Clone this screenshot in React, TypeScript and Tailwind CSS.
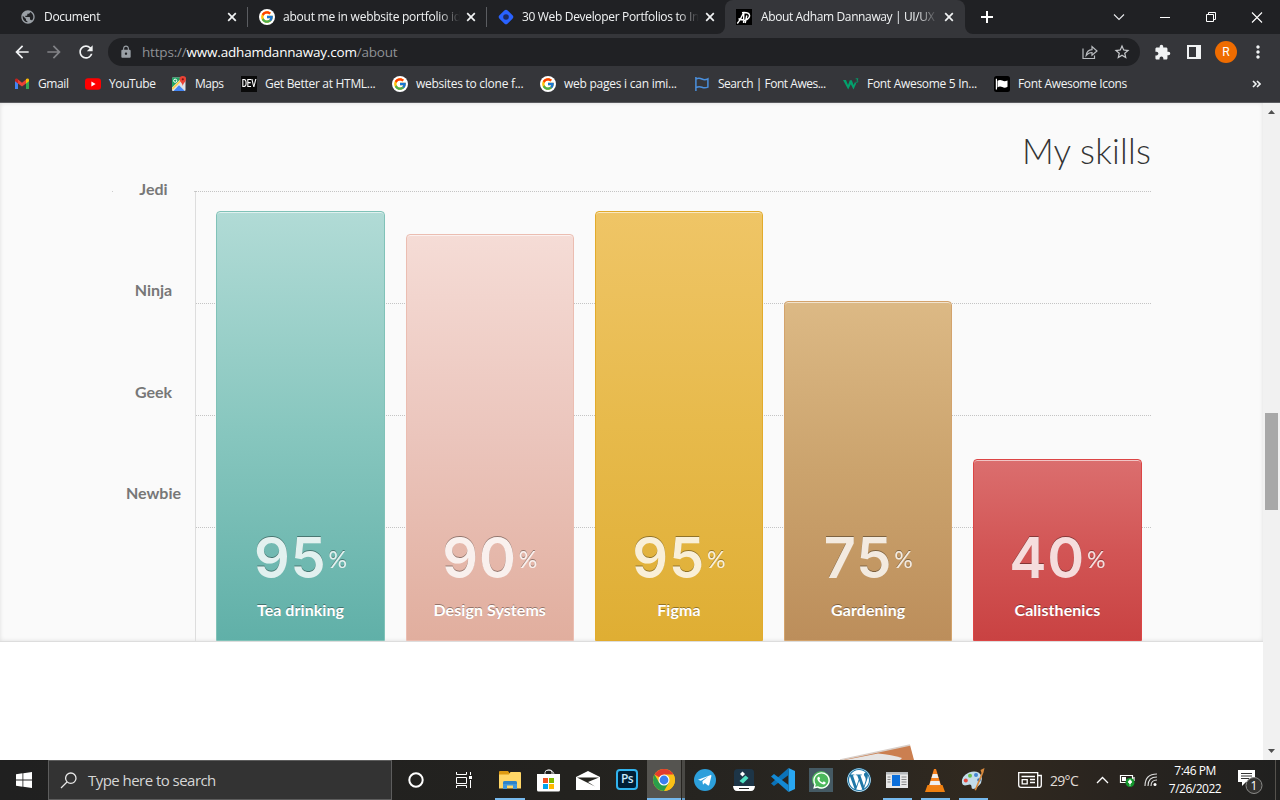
import React from "react";
import type { ReactNode } from "react";
import { FcGoogle } from "react-icons/fc";
import {
  MdArrowBack,
  MdArrowForward,
  MdExtension,
  MdLock,
  MdMoreVert,
  MdPublic,
  MdRefresh,
  MdStarBorder,
} from "react-icons/md";
import { FaWhatsapp, FaWordpress } from "react-icons/fa";

/* ---------- favicons ---------- */

const Google = () => (
  <span className="flex size-4 shrink-0 items-center justify-center rounded-full bg-white">
    <FcGoogle size={14} />
  </span>
);

const DiamondIcon = () => (
  <svg width="16" height="16" viewBox="0 0 16 16" className="shrink-0">
    <rect x="2.2" y="2.2" width="11.6" height="11.6" rx="2.4" transform="rotate(45 8 8)" fill="#2962ff" />
    <circle cx="8" cy="8" r="2.8" fill="#1c2b63" />
  </svg>
);

const AdhamIcon = () => (
  <svg width="16" height="16" viewBox="0 0 16 16" className="shrink-0">
    <rect width="16" height="16" fill="#000" />
    <path
      d="M1.300 14.500Q4 11.500 7.800 3.300L7.600 14M2.500 9.800 9 11.500Q13.800 9.500 13.600 6.300 12.800 3 6 3.600M10.800 6.500 9.200 14"
      fill="none"
      stroke="#fff"
      strokeWidth="1.400"
    />
  </svg>
);

const GmailIcon = () => (
  <svg width="16" height="16" viewBox="0 0 16 16" className="shrink-0">
    <path d="M1 4v9h3V6.5z" fill="#4285f4" />
    <path d="M15 4v9h-3V6.5z" fill="#34a853" />
    <path d="M4 3.5v4L8 10.6l4-3.1v-4L8 6.7z" fill="#ea4335" />
    <path d="M1 4c0-1.7 1.8-2 3-.9v4.4L1 5.2z" fill="#c5221f" />
    <path d="M15 4c0-1.7-1.8-2-3-.9v4.4l3-2.3z" fill="#fbbc04" />
  </svg>
);

const YouTubeIcon = () => (
  <svg width="16" height="16" viewBox="0 0 16 16" className="shrink-0">
    <rect y="2.2" width="16" height="11.6" rx="3" fill="#f00" />
    <path d="M6.4 5.5v5L10.6 8z" fill="#fff" />
  </svg>
);

const MapsIcon = () => (
  <svg width="16" height="16" viewBox="0 0 16 16" className="shrink-0">
    <rect x="1" y="1.500" width="13.500" height="13.500" rx="1" fill="#dfe2e6" />
    <path d="M1 2.500q0-1 1-1h9L1 11.500z" fill="#1fa463" />
    <path d="M2.500 15 8 9.200l5.800 5.800z" fill="#4285f4" />
    <path d="M1 12 9.500 3.500l1.200 1.200L1.500 14z" fill="#ffd04c" />
    <circle cx="4.200" cy="4.700" r="1.600" fill="none" stroke="#fff" strokeWidth="1" />
    <path d="M11.800 0a3.300 3.300 0 0 1 3.300 3.300c0 2.300-2.600 3.300-3.300 6.600-.7-3.300-3.300-4.300-3.300-6.600A3.300 3.300 0 0 1 11.800 0z" fill="#ea4335" />
    <circle cx="11.800" cy="3.300" r="1.100" fill="#811411" />
  </svg>
);

const DevIcon = () => (
  <span className="flex size-4 shrink-0 items-center justify-center overflow-hidden bg-[#0a0a0a] font-['Roboto'] text-[8px] font-medium leading-none tracking-[-0.2px] text-white">
    <span className="scale-y-[1.35]">DEV</span>
  </span>
);

const FlagIcon = () => (
  <svg width="16" height="16" viewBox="0 0 16 16" className="shrink-0">
    <path d="M1.900 1v14M1.900 3q3-1.400 6 0t6-.2v8.300q-3 1.400-6 .1t-6 .5" fill="none" stroke="#4a8fdc" strokeWidth="1.500" />
  </svg>
);

const W3Icon = () => (
  <svg width="16" height="16" viewBox="0 0 16 16" className="shrink-0">
    <path d="M0 4h3l2 5 1.800-4.800h2L10.600 9l1.400-3 1.200 1.600-2.700 5.800L7.800 8.300 5.200 13.400z" fill="#04a06c" />
    <path d="M12.700 2.800h2.400l-1.200 1.500q1.300.2 1 1.400-.6 1-2.200.4" fill="none" stroke="#04a06c" strokeWidth=".9" />
  </svg>
);

const BlackFlagIcon = () => (
  <svg width="16" height="16" viewBox="0 0 16 16" className="shrink-0">
    <rect width="16" height="16" rx="2.500" fill="#000" />
    <path d="M2.400 2.700v10.800" stroke="#fff" strokeWidth="1.200" />
    <path d="M3.500 4.800q2.400-1.400 4.800-.2t5.200-.2v6.400q-2.600 1.500-5.200.3t-4.800.3z" fill="#fff" />
  </svg>
);

/* ---------- browser chrome ---------- */

const Close = () => (
  <svg width="10" height="10" viewBox="0 0 10 10" className="shrink-0">
    <path d="M1.200 1.200l7.600 7.600M8.800 1.200 1.200 8.800" stroke="#f1f3f4" strokeWidth="1.700" />
  </svg>
);

const TabTitle = ({ children, className }: { children: ReactNode; className: string }) => (
  <span
    className={`w-[177px] shrink-0 overflow-hidden whitespace-nowrap [mask-image:linear-gradient(to_right,black_88%,transparent_100%)] ${className}`}
  >
    {children}
  </span>
);

const TabStrip = () => (
  <div className="flex h-[34px] items-center bg-[#202124] text-[12px] text-[#f1f3f4]">
    <div className="flex w-[247px] items-center pl-5">
      <MdPublic size={16} className="shrink-0 text-[#9aa0a6]" />
      <TabTitle className="ml-2 mr-[6px] tracking-[-0.3px]">Document</TabTitle>
      <Close />
    </div>
    <div className="h-5 w-px bg-[#5b5d61]" />
    <div className="flex w-[238px] items-center pl-[11px]">
      <Google />
      <TabTitle className="ml-2 mr-[6px] tracking-[-0.24px]">about me in webbsite portfolio id</TabTitle>
      <Close />
    </div>
    <div className="h-5 w-px bg-[#5b5d61]" />
    <div className="flex w-[238px] items-center pl-[11px]">
      <DiamondIcon />
      <TabTitle className="ml-2 mr-[6px] tracking-[-0.33px]">30 Web Developer Portfolios to In</TabTitle>
      <Close />
    </div>
    <div className="relative flex h-full w-[240px] items-center rounded-t-lg bg-[#35363a] pl-[11px]">
      <svg width="8" height="8" className="absolute -left-2 bottom-0">
        <path d="M8 0v8H0a8 8 0 0 0 8-8z" fill="#35363a" />
      </svg>
      <svg width="8" height="8" className="absolute -right-2 bottom-0">
        <path d="M0 0v8h8a8 8 0 0 1-8-8z" fill="#35363a" />
      </svg>
      <AdhamIcon />
      <TabTitle className="ml-[9px] mr-[6px] tracking-[-0.38px]">About Adham Dannaway | UI/UX</TabTitle>
      <Close />
    </div>
    <svg width="12" height="12" viewBox="0 0 12 12" className="ml-4">
      <path d="M6 0v12M0 6h12" stroke="#fff" strokeWidth="2" />
    </svg>
    <div className="ml-auto flex h-7 items-center">
      <svg width="46" height="28" fill="none" stroke="#e8eaed" strokeWidth="1.100">
        <path d="M18 11.500l5 5 5-5" />
      </svg>
      <svg width="46" height="28" fill="none" stroke="#fff">
        <path d="M18 14.500h10" />
      </svg>
      <svg width="46" height="28" fill="none" stroke="#fff">
        <path d="M18.500 11.500h7v7h-7zM20.500 11.500v-2h7v7h-2" />
      </svg>
      <svg width="46" height="28" fill="none" stroke="#fff" strokeWidth="1.100">
        <path d="M18 9.500l10 10M28 9.500l-10 10" />
      </svg>
    </div>
  </div>
);

const Toolbar = () => (
  <div className="flex h-9 items-center bg-[#35363a] text-[#f1f3f4]">
    <div className="flex w-[108px] items-center gap-3 pl-3">
      <MdArrowBack size={20} className="shrink-0" />
      <MdArrowForward size={20} className="shrink-0 text-[#828387]" />
      <MdRefresh size={20} className="shrink-0" />
    </div>
    <div className="flex h-7 w-[1032px] items-center rounded-full bg-[#202124] pl-[11px] pr-[9px]">
      <MdLock size={14} className="text-[#9aa0a6]" />
      <span className="ml-[9px] text-[13.500px] tracking-[-0.190px] text-[#8f9296]">
        https://<span className="text-white">www.adhamdannaway.com</span>/about
      </span>
      <svg width="16" height="16" viewBox="0 0 16 16" className="ml-auto" fill="none" stroke="#b9bcc0" strokeWidth="1.200">
        <path d="M1 4.500v10h11.500V11.500" />
        <path d="M4.200 11.500q.6-5.500 5.800-5.800V2.500l5 4.500-5 4.300V8.500q-3.500 0-5.800 3z" />
      </svg>
      <MdStarBorder size={18} className="ml-[15px] text-[#c7c9cc]" />
    </div>
    <MdExtension size={17} className="ml-[14px]" />
    <svg width="14" height="14" viewBox="0 0 14 14" className="ml-[16px]">
      <path d="M0 0h14v14H0zM2 2v10h7V2z" fill="#f1f3f4" fillRule="evenodd" />
    </svg>
    <span className="ml-[14px] flex size-[22px] items-center justify-center rounded-full bg-[#ef6c00] font-['Roboto'] text-[12px] text-white">
      R
    </span>
    <MdMoreVert size={20} className="ml-[11px]" />
  </div>
);

const Bookmark = ({ icon, label, className }: { icon: ReactNode; label: string; className: string }) => (
  <div className={`flex shrink-0 items-center gap-2 whitespace-nowrap ${className}`}>
    {icon}
    <span>{label}</span>
  </div>
);

const BookmarksBar = () => (
  <div className="flex h-[33px] items-center border-b border-[#5a5b5f] bg-[#35363a] pb-[4px] pl-[14px] text-[12px] text-[#f1f3f4]">
    <Bookmark icon={<GmailIcon />} label="Gmail" className="w-[71px] tracking-[-0.4px]" />
    <Bookmark icon={<YouTubeIcon />} label="YouTube" className="w-[86px] tracking-[-0.4px]" />
    <Bookmark icon={<MapsIcon />} label="Maps" className="w-[70px] tracking-[-0.5px]" />
    <Bookmark icon={<DevIcon />} label="Get Better at HTML..." className="w-[151px] tracking-[-0.3px]" />
    <Bookmark icon={<Google />} label="websites to clone f..." className="w-[148px] tracking-[-0.27px]" />
    <Bookmark icon={<Google />} label="web pages i can imi..." className="w-[154px] tracking-[-0.25px]" />
    <Bookmark icon={<FlagIcon />} label="Search | Font Awes..." className="w-[149px] tracking-[-0.48px]" />
    <Bookmark icon={<W3Icon />} label="Font Awesome 5 In..." className="w-[151px] tracking-[-0.3px]" />
    <Bookmark icon={<BlackFlagIcon />} label="Font Awesome Icons" className="w-[150px] tracking-[-0.34px]" />
    <svg width="9" height="8" viewBox="0 0 9 8" className="ml-auto mr-[19px]" fill="none" stroke="#f1f3f4" strokeWidth="1.600">
      <path d="M1 1l3 3-3 3M5 1l3 3-3 3" />
    </svg>
  </div>
);

/* ---------- page ---------- */

const skills = [
  { value: 95, label: "Tea drinking", bar: "h-[430px] border-[#80c2b8] from-[#b1dbd6] via-[#88c7bf] to-[#60b0a8]" },
  { value: 90, label: "Design Systems", bar: "h-[407px] border-[#ebbdb1] from-[#f5dcd6] via-[#ebc5bc] to-[#e1ae9e]" },
  { value: 95, label: "Figma", bar: "h-[430px] border-[#e2ab2c] from-[#efc566] via-[#e7ba4b] to-[#dfae33]" },
  { value: 75, label: "Gardening", bar: "h-[340px] border-[#d3a36c] from-[#dcb985] via-[#cba36d] to-[#bc8e5b]" },
  { value: 40, label: "Calisthenics", bar: "h-[182px] border-[#dc4545] from-[#db6e6e] via-[#d25555] to-[#c94242]" },
];

const levels = ["Jedi", "Ninja", "Geek", "Newbie"];

const SkillsChart = () => (
  <div className="ml-[112px] mt-[17px] flex h-[450px] w-[1039px]">
    <div className="flex h-full w-[83px] flex-col items-center font-['Lato'] text-[16px] font-bold text-[#777]">
      <div className="flex h-px w-full items-center justify-center border-t border-dotted border-[#ccc]">
        <span className="mt-[-7px] w-[79px] bg-[#fafafa] text-center leading-5">{levels[0]}</span>
      </div>
      {levels.slice(1).map((level) => (
        <span key={level} className="mt-[81.500px] leading-5 first-of-type:mt-[88px]">
          {level}
        </span>
      ))}
    </div>
    <div className="grid h-full w-[956px]">
      <div className="col-start-1 row-start-1 flex flex-col">
        {levels.map((level) => (
          <div key={level} className="h-28 border-t border-dotted border-[#c4c4c4]" />
        ))}
      </div>
      <div className="col-start-1 row-start-1 mt-px flex items-end gap-[20.850px] border-l border-[#ddd] pl-[20.300px]">
        {skills.map((skill) => (
          <div
            key={skill.label}
            className={`flex w-[168.400px] shrink-0 flex-col items-center justify-end rounded-t-[4px] border bg-linear-to-b pb-[20px] shadow-[inset_0_1px_0_rgba(255,255,255,0.6)] ${skill.bar}`}
          >
            <div className="flex items-center text-white opacity-80 [text-shadow:0_-1px_0_rgba(0,0,0,0.45)]">
              <span className="font-['Inter'] text-[56px] font-semibold leading-[60px] tracking-[0.800px]">{skill.value}</span>
              <span className="ml-[2px] mt-px font-['Lato'] text-[23px] font-medium leading-6">%</span>
            </div>
            <span className="mt-[12px] font-['Lato'] text-[16px] font-bold leading-5 tracking-[0.060px] text-white [text-shadow:0_-1px_0_rgba(0,0,0,0.35)]">
              {skill.label}
            </span>
          </div>
        ))}
      </div>
    </div>
  </div>
);

const Page = () => (
  <div className="flex h-[657px] bg-white">
    <main className="flex w-[1263px] flex-col">
      <section className="h-[539px] border-b border-[#ddd] bg-[#fafafa] shadow-[inset_0_0_4px_rgba(0,0,0,0.12)]">
        <h2 className="ml-auto mr-[112px] pb-px pt-[24px] text-right font-['Lato'] text-[35px] font-light leading-[46px] tracking-[0.200px] text-[#333]">
          My skills
        </h2>
        <SkillsChart />
      </section>
      <svg width="80" height="16" viewBox="840 744 80 16" className="ml-[840px] mt-auto">
        <path d="M840 760l70-15 4 15z" fill="#cb7f50" />
        <path d="M840 760l70-15" stroke="#d9cfc9" strokeWidth="1.500" />
        <path d="M845 760l33-6.500q14 1 24 4.500l-2 2z" fill="#e6e4e3" />
      </svg>
    </main>
    <aside className="flex w-[17px] flex-col items-center bg-[#f1f1f1]">
      <svg width="17" height="17">
        <path d="M5 11h7L8.500 7z" fill="#505050" />
      </svg>
      <div className="mt-[293px] h-[97px] w-[13px] bg-[#a8a8a8]" />
      <svg width="17" height="17" className="mt-auto">
        <path d="M5 6h7l-3.500 4z" fill="#505050" />
      </svg>
    </aside>
  </div>
);

/* ---------- taskbar ---------- */

const Slot = ({ children, className, open = "" }: { children: ReactNode; className: string; open?: string }) => (
  <div className={`flex h-full shrink-0 flex-col items-center ${className}`}>
    <div className="flex h-[38px] items-center pt-[2px]">{children}</div>
    <div className={`h-[2px] ${open}`} />
  </div>
);

const Taskbar = () => (
  <footer className="flex h-10 items-center bg-[linear-gradient(90deg,#202020_0%,#23221f_45%,#292621_65%,#31291f_77%,#29241f_87%,#20201f_100%)] text-white">
    <Slot className="w-12">
      <svg width="16" height="16" viewBox="0 0 16 16" fill="#fff">
        <path d="M0 2.200 6.500 1.300V7.600H0zM7.300 1.200 16 0v7.600H7.300zM0 8.400h6.500v6.300L0 13.800zM7.300 8.400H16V16l-8.700-1.200z" />
      </svg>
    </Slot>
    <div className="flex h-full w-[344px] items-center border border-[#5d5d5d] bg-[#333] pl-[11px]">
      <svg width="17" height="17" viewBox="0 0 17 17" fill="none" stroke="#e8e8e8" strokeWidth="1.300">
        <circle cx="10.800" cy="6.200" r="5.200" />
        <path d="M7 10 1 16" />
      </svg>
      <span className="ml-[11px] text-[15px] tracking-[-0.540px] text-[#d6d6d6]">Type here to search</span>
    </div>
    <Slot className="w-12">
      <svg width="16" height="16">
        <circle cx="8" cy="8" r="6.700" fill="none" stroke="#fff" strokeWidth="2" />
      </svg>
    </Slot>
    <Slot className="w-[46px]">
      <svg width="17" height="16" fill="none" stroke="#fff">
        <path d="M1.500 0v2.500h10V0M1.500 5.500h10v6h-10zM1.500 16v-2.500h10V16M15.500 0v3M15.500 8v8" />
        <path d="M14 4h3v3h-3z" fill="#fff" stroke="none" />
      </svg>
    </Slot>
    <Slot className="w-12" open="w-[30px] bg-[#76b9ed]">
      <svg width="22" height="18" viewBox="0 0 22 18">
        <path d="M0 1q0-1 1-1h8l1.500 2H21v5H0z" fill="#dd9a12" />
        <path d="M0 3.500h10L11.500 1H21q1 0 1 1v15.500H0z" fill="#ffd667" />
        <path d="M4 18v-6q0-2 2-2h10q2 0 2 2v6h-4v-3.500H8V18z" fill="#3f97dc" />
        <path d="M4 13h14v-1.500q0-1.500-2-1.500H6q-2 0-2 1.500z" fill="#2e83c8" />
      </svg>
    </Slot>
    <Slot className="w-7">
      <svg width="23" height="23" viewBox="0 0 23 23">
        <path d="M8 6V3.500Q8 1 11.500 1T15 3.500V6M9.800 1.500q5-2 7 3V6" fill="none" stroke="#ddd" strokeWidth="1" />
        <path d="M0 5h23v16q0 1.500-1.500 1.500h-20Q0 22.500 0 21z" fill="#fff" />
        <path d="M6 9h5v5H6z" fill="#f25022" />
        <path d="M12 9h5v5h-5z" fill="#7fba00" />
        <path d="M6 15h5v5H6z" fill="#00a4ef" />
        <path d="M12 15h5v5h-5z" fill="#ffb900" />
      </svg>
    </Slot>
    <Slot className="w-[52px]">
      <svg width="24" height="19" viewBox="0 0 24 19">
        <path d="M0 6 12 0l12 6v13H0z" fill="#fff" />
        <path d="M1 6.500h22L12 11l7 4.500L3 7.500z" fill="#25241f" />
      </svg>
    </Slot>
    <Slot className="w-[26px]">
      <span className="mb-[2px] flex h-[21px] w-[22px] items-center justify-center rounded-[4px] border-2 border-[#31b4ef] bg-[#001e36] text-[12px] font-semibold leading-none tracking-[-0.700px] text-[#c9e8fb]">
        Ps
      </span>
    </Slot>
    <Slot className="ml-[7px] w-[34px] bg-[#555450]" open="w-full bg-[#76b9ed]">
      <svg width="22" height="22" viewBox="0 0 22 22">
        <circle cx="11" cy="11" r="11" fill="#fbc116" />
        <path d="M11 11 1.500 5.500A11 11 0 0 1 20.500 5.500z" fill="#e33b2e" />
        <path d="M11 5.500h9.500A11 11 0 0 1 11 22l4.800-8.200z" fill="#fbc116" />
        <path d="M1.500 5.500A11 11 0 0 0 11 22l4.800-8.200L11 11l-4.800 2.800z" fill="#2a9e4b" />
        <circle cx="11" cy="11" r="5.500" fill="#fff" />
        <circle cx="11" cy="11" r="4.400" fill="#3c7ff0" />
      </svg>
    </Slot>
    <Slot className="ml-px w-[3px] bg-[#4a4945]" open="w-full bg-[#5f9cca]">
      <span />
    </Slot>
    <Slot className="w-[39px]">
      <svg width="22" height="22" viewBox="0 0 22 22">
        <circle cx="11" cy="11" r="11" fill="#2c9fdb" />
        <path d="M4 10.800 16.800 6q.8 0 .6.900L15.200 16q-.3.900-1.200.4l-3.200-2.500-1.800 1.800-.6-3.500 6-5-7.500 4.600z" fill="#fff" />
      </svg>
    </Slot>
    <Slot className="w-[39px]">
      <svg width="22" height="22" viewBox="0 0 22 22">
        <rect x="1" y="0" width="20" height="20" rx="3.500" fill="#1d3547" />
        <path d="M9.500 2.500 12 5 9.500 7.500 7 5z" fill="#fff" />
        <path d="M12.500 6.500 15.500 9 10 14.500 6.500 12z" fill="#4fe0c2" />
        <path d="M0 17h22q-.5 5-4 5H4q-3.500 0-4-5z" fill="#fff" />
        <path d="M6 19.500h10" stroke="#222" />
      </svg>
    </Slot>
    <Slot className="w-10">
      <svg width="24" height="24" viewBox="0 0 24 24">
        <path d="M17.500 0 24 3v18l-6.500 3z" fill="#29a7f2" />
        <path d="M0 15.500 17.500 0v7L3 18z" fill="#0b72b8" />
        <path d="M0 8.500 17.500 24v-7L3 6z" fill="#1389d4" />
      </svg>
    </Slot>
    <Slot className="w-9">
      <span className="flex size-6 items-center justify-center bg-[#455a64]">
        <span className="flex size-[18px] items-center justify-center rounded-full bg-[#4bb85b]">
          <FaWhatsapp size={19} className="shrink-0" />
        </span>
      </span>
    </Slot>
    <Slot className="w-10">
      <span className="flex size-6 items-center justify-center rounded-full bg-[#1f78a8]">
        <FaWordpress size={24} />
      </span>
    </Slot>
    <Slot className="w-9" open="w-[29px] bg-[#76b9ed]">
      <svg width="22" height="16" viewBox="0 0 22 16">
        <path d="M0 0h22v16H0z" fill="#e8e8e8" />
        <path d="M0 0h22v2.500H0z" fill="#b7babd" />
        <path d="M6 3h8v11H6z" fill="#0b6fdb" />
        <path d="M1.500 5h3M1.500 7.500h3M1.500 10h3M15.500 5h5M15.500 7.500h5M15.500 10h5M15.500 12.500h5" stroke="#888" />
      </svg>
    </Slot>
    <Slot className="w-10" open="w-[29px] bg-[#76b9ed]">
      <svg width="20" height="23" viewBox="0 0 20 23">
        <path d="M9 0h2l5.500 18h-13z" fill="#f5821f" />
        <path d="M7.700 5h4.600l1.200 4h-7zM5.600 12h8.800l1.100 4h-11z" fill="#eee" />
        <path d="M2.500 16h1.800q5.700 3.500 11.400 0h1.800L20 23H0z" fill="#f08010" />
      </svg>
    </Slot>
    <Slot className="w-9" open="w-[29px] bg-[#76b9ed]">
      <svg width="24" height="24" viewBox="0 0 24 24">
        <path d="M1 15Q0 8 8 4.500q9-3 12.500 3.500 2 7-5.500 12-5 2.500-4.500-1.500 0-3-4-1.500-5 1.500-5.500-2z" fill="#c3dcea" />
        <circle cx="4.800" cy="12.500" r="2" fill="#e5483d" />
        <circle cx="9" cy="7.800" r="2" fill="#6abf4b" />
        <circle cx="15" cy="7" r="2" fill="#4285d4" />
        <circle cx="18" cy="12" r="1.800" fill="#2f6bb5" />
        <path d="M13.500 22 20.500 5l-1-3 4-2-1 4.500L15 22.500z" fill="#d98a3d" />
      </svg>
    </Slot>
    <svg width="24" height="16" viewBox="0 0 24 16" className="ml-[27px]" fill="none" stroke="#fff" strokeWidth="1.300">
      <path d="M.7.700h19v14.600H3q-2.300 0-2.300-2.300zM19.700 3.500h3.600V13q0 2.300-2 2.300h-2" />
      <path d="M3.500 4.500h13.500M12 7.500h5M12 10.500h5M4.200 7.700h5v4.200h-5z" />
    </svg>
    <span className="ml-[8px] w-[46px] whitespace-nowrap text-[14px] tracking-[-0.700px] text-[#e0ddd8]">29°C</span>
    <svg width="13" height="8" className="shrink-0" fill="none" stroke="#fff" strokeWidth="1.300">
      <path d="M1 7l5.500-5.500L12 7" />
    </svg>
    <svg width="16" height="14" viewBox="0 0 16 14" className="ml-[10px] shrink-0">
      <path d="M1.500 2.500h12v7h-12zM15 4v4" fill="none" stroke="#fff" strokeWidth="1.200" />
      <path d="M3 4h4v4H3z" fill="#fff" />
      <circle cx="11" cy="9.500" r="4.500" fill="#13962c" />
      <path d="M11 6.500 13 9l-2 2-2-2zM11 10v3" fill="#fff" stroke="#fff" strokeWidth=".7" />
    </svg>
    <svg width="14" height="14" viewBox="0 0 14 14" className="ml-[9px] shrink-0" fill="none" stroke="#ddd" strokeWidth="1.100">
      <path d="M1 13Q1 1 13 1M4 13Q4 4 13 4M7 13Q7 7 13 7" />
      <circle cx="11" cy="11.500" r="1.500" fill="#fff" stroke="none" />
    </svg>
    <div className="ml-[8px] flex w-[58px] flex-col items-center whitespace-nowrap text-[12px] leading-[18px] tracking-[-0.500px]">
      <span>7:46 PM</span>
      <span>7/26/2022</span>
    </div>
    <svg width="27" height="26" viewBox="0 0 27 26" className="ml-[14px] mt-[4px] shrink-0">
      <path d="M0 1h17v12H8l-4 4v-4H0z" fill="#fff" />
      <path d="M3 4.500h11M3 7h11M3 9.500h8" stroke="#333" />
      <circle cx="16" cy="16.500" r="8" fill="#333230" stroke="#8a8a88" />
      <text x="16" y="21" textAnchor="middle" fontSize="12" fontFamily="Open Sans" fill="#fff">1</text>
    </svg>
    <div className="ml-auto mr-1 h-full w-px bg-[#55524d]" />
  </footer>
);

export default function App() {
  return (
    <div className="flex h-[800px] w-[1280px] flex-col overflow-hidden font-['Open_Sans','Noto_Sans',sans-serif]">
      <TabStrip />
      <Toolbar />
      <BookmarksBar />
      <Page />
      <Taskbar />
    </div>
  );
}
